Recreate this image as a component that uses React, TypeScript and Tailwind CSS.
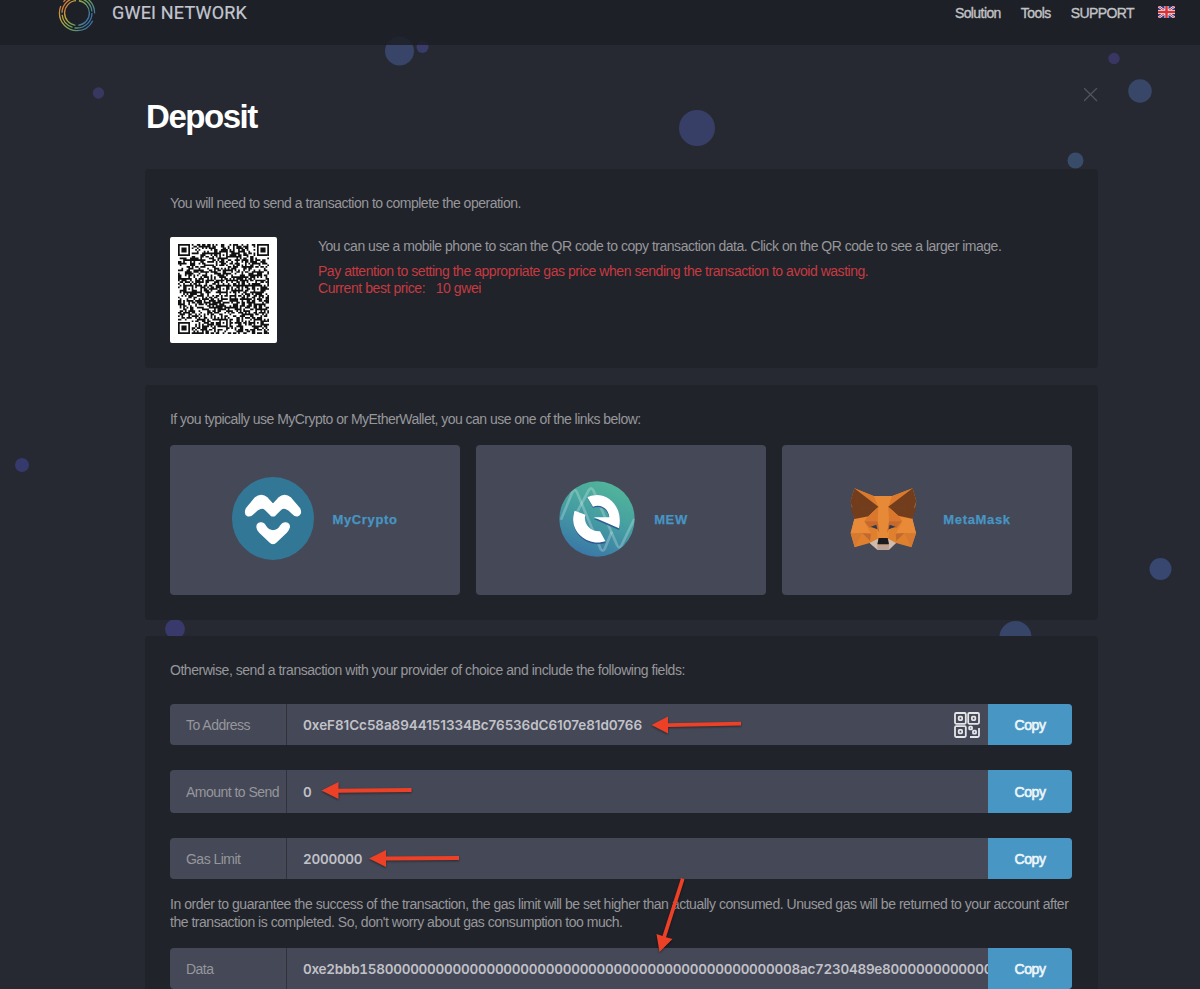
import type { ReactNode } from "react";

const QR_SIZE = 53;

function buildQrPath() {
  const n = QR_SIZE;
  const grid: boolean[][] = Array.from({ length: n }, () => Array(n).fill(false));
  let seed = 90210;
  for (let y = 0; y < n; y++) {
    for (let x = 0; x < n; x++) {
      seed = (seed * 48271) % 2147483647;
      grid[y][x] = seed / 2147483647 > 0.47;
    }
  }
  const square = (cx: number, cy: number, rings: boolean[]) => {
    const r = rings.length - 1;
    for (let dy = -r; dy <= r; dy++) {
      for (let dx = -r; dx <= r; dx++) {
        const row = grid[cy + dy];
        if (row && cx + dx >= 0 && cx + dx < n) {
          row[cx + dx] = rings[Math.max(Math.abs(dx), Math.abs(dy))];
        }
      }
    }
  };
  const align = [true, false, true];
  const finder = [true, true, false, true, false];
  [[26, 6], [6, 26], [26, 26], [46, 26], [26, 46], [46, 46]].forEach(([x, y]) => square(x, y, align));
  [[3, 3], [n - 4, 3], [3, n - 4]].forEach(([x, y]) => square(x, y, finder));
  let d = "";
  grid.forEach((row, y) => row.forEach((on, x) => { if (on) d += `M${x} ${y}h1v1h-1z`; }));
  return d;
}

const QR_PATH = buildQrPath();

function Logo() {
  return (
    <svg className="h-[38px] w-[38px] shrink-0" viewBox="0 0 38 38" fill="none" stroke="url(#ring)" strokeWidth="1.3">
      <defs>
        <linearGradient id="ring" x1="0" y1="0.2" x2="1" y2="0.8">
          <stop offset="0" stopColor="#d2603a" />
          <stop offset="0.2" stopColor="#c9a93a" />
          <stop offset="0.55" stopColor="#6fa557" />
          <stop offset="1" stopColor="#3268b4" />
        </linearGradient>
      </defs>
      <circle cx="19" cy="19" r="12.4" strokeDasharray="36 3" strokeDashoffset="-21" />
      <circle cx="19" cy="19" r="15" strokeDasharray="26 2 17 2.1" />
      <circle cx="19" cy="19" r="17.6" strokeDasharray="54 5 44 7.6" strokeDashoffset="-8" />
    </svg>
  );
}

function Flag() {
  return (
    <svg className="-mt-[2px] h-3 w-[17px]" viewBox="0 0 17 12" preserveAspectRatio="none">
      <path d="M0 0h17v12H0z" fill="#2b3a86" />
      <path d="M0 0l17 12M17 0L0 12" stroke="#e8e4ea" strokeWidth="2.4" />
      <path d="M0 0l17 12M17 0L0 12" stroke="#d6373d" strokeWidth="1" />
      <path d="M8.5 0v12M0 6h17" stroke="#f0ecee" strokeWidth="4" />
      <path d="M8.5 0v12M0 6h17" stroke="#dc3237" strokeWidth="2.5" />
    </svg>
  );
}

function MyCryptoIcon() {
  return (
    <svg className="-mt-[3px] h-[83px] w-[82px]" viewBox="36 36 246 252" preserveAspectRatio="none">
      <ellipse cx="159" cy="162" rx="123" ry="126" fill="#327896" />
      <g fill="#fff" stroke="#fff" strokeWidth="4" strokeLinejoin="round">
        <path d="M79 132L105 100Q124 84 142 100L159 119L176 100Q194 84 212 100L239 132Q246 150 232 154Q225 155 217 146Q194 122 182 135L166 151Q159 157 152 151L136 135Q124 122 101 146Q92 156 82 153Q73 148 79 132Z" />
        <path d="M111 188C111 173 130 170 137 186Q145 198 159 200Q174 198 181 186C190 170 208 173 208 188Q206 196 199 204L169 233Q159 244 149 233L119 204Q112 197 111 188Z" />
      </g>
    </svg>
  );
}

function MewIcon() {
  return (
    <svg className="-mt-[2px] h-[76px] w-[76px]" viewBox="58 48 228 228">
      <defs>
        <linearGradient id="mew" x1="0.7" y1="0" x2="0.3" y2="1">
          <stop offset="0" stopColor="#52b69a" />
          <stop offset="0.5" stopColor="#449da2" />
          <stop offset="1" stopColor="#3a76a8" />
        </linearGradient>
        <clipPath id="mewClip"><circle cx="172" cy="162" r="113" /></clipPath>
      </defs>
      <circle cx="172" cy="162" r="113" fill="url(#mew)" />
      <g clipPath="url(#mewClip)" fill="none" stroke="#fff" strokeOpacity="0.24" strokeWidth="8" strokeLinejoin="round">
        <path d="M64 164L98 82Q105 68 112 82L182 250Q189 264 196 250L216 200" />
        <path d="M112 142L147 76Q154 64 161 76L232 240Q239 254 246 240L284 162" />
      </g>
      <path d="M102 143L137 156C130 180 151 206 181 204L198 233C158 250 88 217 102 143ZM143 98C193 72 254 120 238 195L162 162L209 161C207 137 185 119 160 128Z" fill="#315c92" />
      <path d="M105 137L137 149C130 175 151 201 181 199L197 228C151 247 82 203 105 137ZM143 97C193 71 254 119 238 190L162 157L209 157C207 132 185 115 160 125Z" fill="#fff" />
    </svg>
  );
}

function FoxIcon() {
  return (
    <svg className="-mt-[2px] h-[63px] w-[67px]" viewBox="63 54 201 189">
      <path d="M76 55L134 78H190L251 55L262 94L250 146L261 190L247 232L201 219L180 239H145L122 219L77 232L65 190L76 147L65 94Z" fill="#df802f" />
      <path d="M134 78H190L178 111L184 158L178 204H146L140 158L148 111Z" fill="#e78a38" />
      <path d="M76 147L115 141L106 156L125 189H65Z" fill="#e88a38" />
      <path d="M250 146L211 141L220 156L201 189H261Z" fill="#e88a38" />
      <path d="M76 55L134 78L148 111ZM251 55L190 78L178 111Z" fill="#db792c" />
      <path d="M76 55L148 110L118 139L76 147L66 119L70 111L64 96ZM251 55L178 110L208 137L250 146L260 119L256 111L262 94Z" fill="#713d1c" />
      <path d="M76 55L94 116L148 110M94 116L76 147M94 116L118 139M251 55L232 116L178 110M232 116L250 146M232 116L208 137" stroke="#7a4420" strokeWidth="1.2" fill="none" />
      <path d="M148 111L146 155L106 154L118 139ZM178 111L180 155L220 154L208 137Z" fill="#d9772e" />
      <path d="M106 154H146L151 188L140 170L122 174ZM180 154H218L202 174L185 170L174 188Z" fill="#c7692e" />
      <path d="M65 190L100 189L77 232ZM261 190L226 189L247 232Z" fill="#d77a31" />
      <path d="M100 189L126 191L123 213ZM226 189L200 191L202 213Z" fill="#c16a30" />
      <path d="M125 170L142 164L145 178ZM182 164L200 170L179 178Z" fill="#2c3b4b" />
      <path d="M122 219L147 206V224H178V206L201 219L180 239H145Z" fill="#cfbcae" />
      <path d="M145 224H180V239H145Z" fill="#b9a296" />
      <path d="M149 204H176L180 223H145Z" fill="#1a1b1e" />
    </svg>
  );
}

function QrIcon() {
  return (
    <svg className="h-[26px] w-[26px]" viewBox="0 0 26 26" fill="none" stroke="#e6e6e9" strokeWidth="1.8">
      <rect x="1" y="1" width="10.8" height="10.8" rx="1.2" />
      <rect x="14.2" y="1" width="10.8" height="10.8" rx="1.2" />
      <rect x="1" y="14.2" width="10.8" height="10.8" rx="1.2" />
      <rect x="4.7" y="4.7" width="3.4" height="3.4" rx="0.8" />
      <rect x="17.9" y="4.7" width="3.4" height="3.4" rx="0.8" />
      <rect x="4.7" y="17.9" width="3.4" height="3.4" rx="0.8" />
      <rect x="15.2" y="14.6" width="2.8" height="2.8" rx="0.7" />
      <rect x="19" y="18.6" width="3" height="3" rx="0.7" />
      <path d="M25 16v7.5Q25 25 23.5 25H16" />
    </svg>
  );
}

function Wallet({ icon, name, gap }: { icon: ReactNode; name: string; gap: string }) {
  return (
    <button className={`flex h-[150px] items-center justify-center rounded-[4px] bg-[#454857] ${gap}`}>
      {icon}
      <span className="pt-px text-[13px] font-bold tracking-[0.65px] text-[#4795c3] [-webkit-text-stroke:0.25px_#4795c3]">{name}</span>
    </button>
  );
}

type FieldProps = { label: string; value: string; height: string; digits?: string; qr?: boolean };

function Field({ label, value, height, digits = "tabular-nums tracking-[-0.26px]", qr }: FieldProps) {
  return (
    <div className={`flex overflow-hidden rounded-[4px] bg-[#454857] ${height}`}>
      <div className="flex w-[117px] shrink-0 items-center whitespace-nowrap border-r border-[#30333d] pl-4 pt-px text-sm tracking-[-0.52px] text-[#96979b]">{label}</div>
      <div className={`flex min-w-0 flex-1 items-center overflow-hidden whitespace-nowrap pl-4 pt-[2px] font-[Inter] text-[13.5px] font-semibold text-[#c1c2c8] ${digits}`}>{value}</div>
      {qr && <div className="flex items-center pr-2 pt-px"><QrIcon /></div>}
      <button className="w-[84px] shrink-0 bg-[#4796c4] pt-px text-[14px] tracking-[-0.4px] text-[#eef6fb] [-webkit-text-stroke:0.6px_#eef6fb]">Copy</button>
    </div>
  );
}

const DOTS = [
  [399.5, 51, 14.5, "#384468"], [422.5, 47, 6, "#393b68"], [98.5, 93, 5.7, "#38375f"],
  [697, 128, 18, "#383f66"], [1114, 58.5, 5.7, "#3a3663"], [1140, 91, 11.8, "#384768"],
  [1075.5, 160.5, 8, "#384b69"], [22, 465, 7, "#35396b"], [1160.5, 569, 11, "#374770"],
  [175, 629, 10, "#39396b"], [1015.5, 637, 16, "#374569"],
] as const;

const DATA_VALUE = "0xe2bbb158" + "0".repeat(48) + "8ac7230489e8" + "0".repeat(12);

export default function App() {
  return (
    <div className="relative h-[989px] w-[1200px] overflow-hidden bg-[#262932] font-['Liberation_Sans',sans-serif] text-sm text-[#97979a]">
      <svg className="absolute inset-0 h-full w-full" viewBox="0 0 1200 989">
        {DOTS.map(([x, y, r, c]) => <circle key={`${x}`} cx={x} cy={y} r={r} fill={c} />)}
      </svg>

      <header className="relative flex h-[45px] justify-between bg-[#1c1f26]/85 pl-[58px] pr-[25px]">
        <div className="-mt-[6px] flex h-[38px] items-center gap-4">
          <Logo />
          <span className="font-[Roboto] text-[18px] tracking-[0.2px] text-[#c3c6d0] [-webkit-text-stroke:0.2px_#c3c6d0]">GWEI NETWORK</span>
        </div>
        <nav className="flex h-[26px] items-center text-[14px] tracking-[-0.58px] text-[#c2c3c6] [-webkit-text-stroke:0.35px_#c2c3c6]">
          <a className="mr-5">Solution</a>
          <a className="mr-5">Tools</a>
          <a className="mr-6">SUPPORT</a>
          <Flag />
        </nav>
      </header>

      <main className="relative ml-[145px] w-[953px]">
        <div className="flex h-[124px] items-start justify-between">
          <h1 className="pl-px pt-[52px] text-[33px] font-bold leading-10 tracking-[-1.45px] text-white">Deposit</h1>
          <svg className="mt-[43px] h-[14px] w-[14px]" viewBox="0 0 14 14" stroke="#51535d" strokeWidth="1.3"><path d="M0 0l13 13M13 0L0 13" /></svg>
        </div>

        <section className="h-[199px] rounded-[4px] bg-[#20232a] px-[25px] pt-[25px]">
          <p className="leading-[18px] tracking-[-0.495px]">You will need to send a transaction to complete the operation.</p>
          <div className="mt-[25px] flex">
            <div className="h-[106px] w-[107px] rounded-[2px] bg-white p-[8px] pt-[7px]">
              <svg className="h-[90px] w-[91px]" viewBox={`0 0 ${QR_SIZE} ${QR_SIZE}`} preserveAspectRatio="none"><path d={QR_PATH} fill="#111" /></svg>
            </div>
            <div className="ml-[41px] leading-[18px]">
              <p className="tracking-[-0.485px]">You can use a mobile phone to scan the QR code to copy transaction data. Click on the QR code to see a larger image.</p>
              <p className="mt-[7px] tracking-[-0.465px] text-[#c63a41]">Pay attention to setting the appropriate gas price when sending the transaction to avoid wasting.</p>
              <p className="-mt-px tracking-[-0.42px] text-[#c63a41]">Current best price: <span className="ml-[7px]">10 gwei</span></p>
            </div>
          </div>
        </section>

        <section className="mt-[17px] h-[235px] rounded-[4px] bg-[#20232a] pl-[25px] pr-[26px] pt-[25px]">
          <p className="leading-[18px] tracking-[-0.53px]">If you typically use MyCrypto or MyEtherWallet, you can use one of the links below:</p>
          <div className="mt-[17px] grid grid-cols-3 gap-4">
            <Wallet icon={<MyCryptoIcon />} name="MyCrypto" gap="gap-[18px]" />
            <Wallet icon={<MewIcon />} name="MEW" gap="gap-[19px] pl-[5px]" />
            <Wallet icon={<FoxIcon />} name="MetaMask" gap="gap-[26px] pl-[7px]" />
          </div>
        </section>

        <section className="mt-4 h-[360px] rounded-[4px] bg-[#20232a] pl-[25px] pr-[26px] pt-[25px]">
          <p className="leading-[18px] tracking-[-0.46px]">Otherwise, send a transaction with your provider of choice and include the following fields:</p>
          <div className="mt-[25px] flex flex-col gap-[25px]">
            <Field label="To Address" value="0xeF81Cc58a8944151334Bc76536dC6107e81d0766" height="h-[41px]" digits="tracking-[-0.06px]" qr />
            <Field label="Amount to Send" value="0" height="h-[43px]" />
            <Field label="Gas Limit" value="2000000" height="h-[41px]" />
          </div>
          <p className="mb-[17px] mt-[16px] whitespace-nowrap leading-[18px] tracking-[-0.475px]">
            In order to guarantee the success of the transaction, the gas limit will be set higher than actually consumed. Unused gas will be returned to your account after<br />
            the transaction is completed. So, don't worry about gas consumption too much.
          </p>
          <Field label="Data" value={DATA_VALUE} height="h-[41px]" />
        </section>
      </main>

      <svg className="pointer-events-none absolute inset-0 h-full w-full drop-shadow-[0_1px_1px_rgba(0,0,0,0.45)]" viewBox="0 0 1200 989" fill="#ed4127">
        <path d="M651.5 725L668 716.5V723.3L741 721.8V725.6L668 727V733.5Z" />
        <path d="M321.5 790.5L338.5 782V788.7L411.5 788V792L338.5 792.7V799Z" />
        <path d="M369 858.5L386 850V856.5L459 856V860L386 860.5V867Z" />
        <path d="M659.5 952L656.5 934L662.5 936L681 878L684.5 879.3L666 937.3L672.5 939Z" />
      </svg>
    </div>
  );
}
